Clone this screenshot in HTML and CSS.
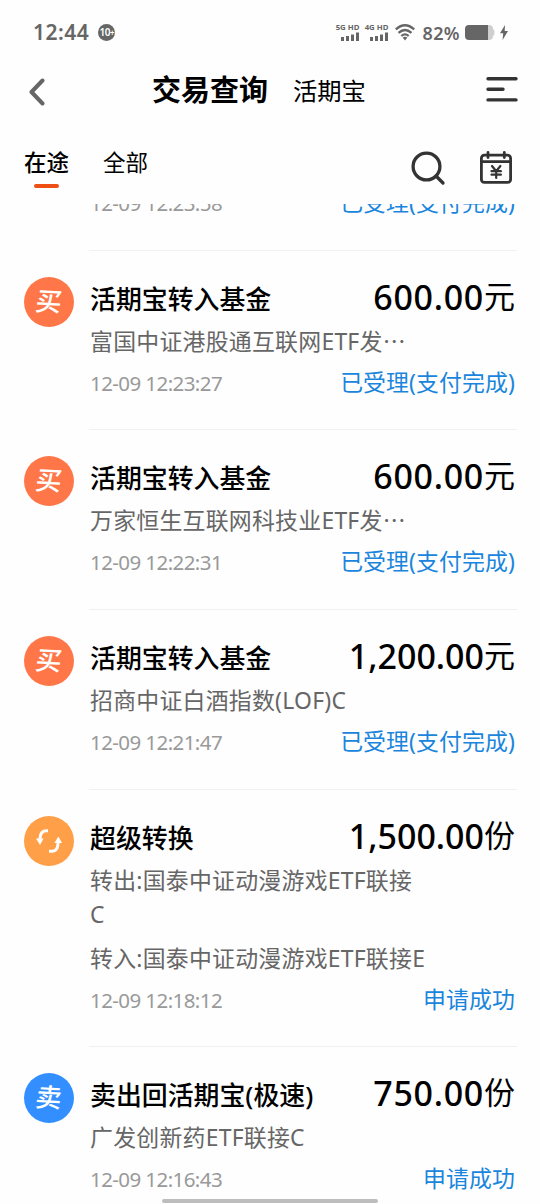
FILE: index.html
```html
<!DOCTYPE html>
<html lang="zh-CN">
<head>
  <meta charset="UTF-8">
  <meta name="viewport" content="width=device-width, initial-scale=1">
  <title>交易查询</title>
  <link rel="stylesheet" href="styles.css">
</head>
<body>
  <header class="top">
    <!-- Status bar -->
    <div class="status-bar">
      <span class="clock">12:44</span>
      <span class="badge">10<i>+</i></span>
      <div class="signals">
        <div class="signal">
          <span>5G HD</span>
          <svg width="18" height="9" viewBox="0 0 18 9"><path d="M0 5h3v4H0zM5 4h3v5H5zM10 2.5h3V9h-3zM15 .5h3V9h-3z"/></svg>
        </div>
        <div class="signal">
          <span>4G HD</span>
          <svg width="18" height="9" viewBox="0 0 18 9"><path d="M0 5h3v4H0zM5 4h3v5H5zM10 2.5h3V9h-3zM15 .5h3V9h-3z"/></svg>
        </div>
      </div>
      <svg class="wifi" width="20" height="17" viewBox="0 0 20 17">
        <path d="M.8 5.4Q10-2.900 19.200 5.400M3.500 8.900Q10 3 16.500 8.900M6.300 12Q10 8.700 13.700 12"/>
        <path class="dot" d="M7.6 13.500Q10 12 12.4 13.500L10 16.5z"/>
      </svg>
      <span class="percent">82%</span>
      <svg class="battery" width="30" height="15" viewBox="0 0 30 15">
        <path fill="#cfcfcf" d="M20 0h4q4 0 4 4 1.5.5 1.5 3.5T28 11q0 4-4 4h-4z"/>
        <path fill="#666" d="M4 0h19v15H4q-4 0-4-4V4q0-4 4-4z"/>
      </svg>
      <svg class="bolt" width="8" height="15" viewBox="0 0 8 15"><path d="M5 0L0 8.3h3.2L2.6 15 8 6H4.7z"/></svg>
    </div>

    <!-- Title bar -->
    <div class="nav">
      <svg class="back" width="18" height="30" viewBox="0 0 18 30"><path d="M15.500 3.5L4.500 15l11 11.5"/></svg>
      <h1 class="title">交易查询</h1>
      <span class="subtitle">活期宝</span>
      <svg class="menu" width="32" height="26" viewBox="0 0 32 26"><path d="M2 1.700h28M2 12.300h15M2 22.900h28"/></svg>
    </div>

    <!-- Tabs -->
    <div class="tabs">
      <span class="tab active">在途</span>
      <span class="tab">全部</span>
      <svg class="search" width="36" height="36" viewBox="0 0 36 36"><circle cx="16.5" cy="16.5" r="13.4"/><path d="M26 26l7 7"/></svg>
      <svg class="calendar" width="34" height="34" viewBox="0 0 34 34">
        <rect x="2.4" y="4.2" width="29.2" height="27.2" rx="3"/>
        <path d="M2.4 10.700h29.200M9 1.500v5M25.300 1.500v5"/>
        <path class="yen" d="M13 15l4.200 5.200 4.200-5.200M12.500 20.200h9.400M12.500 23.700h9.400M17.200 20v7"/>
      </svg>
    </div>
  </header>

  <main class="list">
    <section class="item scrolled">
      <div class="body">
        <div class="row foot"><span class="date">12-09 12:23:58</span><span class="state">已受理(支付完成)</span></div>
      </div>
    </section>

    <section class="item">
      <div class="icon buy"><span>买</span></div>
      <div class="body">
        <div class="row head"><b class="name">活期宝转入基金</b><span class="amount">600.00<em>元</em></span></div>
        <p class="fund">富国中证港股通互联网ETF发⋯</p>
        <div class="row foot"><span class="date">12-09 12:23:27</span><span class="state">已受理(支付完成)</span></div>
      </div>
    </section>

    <section class="item">
      <div class="icon buy"><span>买</span></div>
      <div class="body">
        <div class="row head"><b class="name">活期宝转入基金</b><span class="amount">600.00<em>元</em></span></div>
        <p class="fund">万家恒生互联网科技业ETF发⋯</p>
        <div class="row foot"><span class="date">12-09 12:22:31</span><span class="state">已受理(支付完成)</span></div>
      </div>
    </section>

    <section class="item">
      <div class="icon buy"><span>买</span></div>
      <div class="body">
        <div class="row head"><b class="name">活期宝转入基金</b><span class="amount long">1,200.00<em>元</em></span></div>
        <p class="fund">招商中证白酒指数(LOF)C</p>
        <div class="row foot"><span class="date">12-09 12:21:47</span><span class="state">已受理(支付完成)</span></div>
      </div>
    </section>

    <section class="item">
      <div class="icon swap">
        <svg width="28" height="26" viewBox="0 0 28 26">
          <path d="M13 2.700H11.500Q5.500 2.700 5 10v2M14 23.300h2.500q6 0 6.500-7.300V14"/>
          <path class="tip" d="M1 10.500h7.500L5 17zM19.500 15H27L23.300 8.500z"/>
        </svg>
      </div>
      <div class="body">
        <div class="row head"><b class="name">超级转换</b><span class="amount long">1,500.00<em>份</em></span></div>
        <p class="fund">转出:国泰中证动漫游戏ETF联接<br>C</p>
        <p class="fund">转入:国泰中证动漫游戏ETF联接E</p>
        <div class="row foot"><span class="date">12-09 12:18:12</span><span class="state">申请成功</span></div>
      </div>
    </section>

    <section class="item">
      <div class="icon sell"><span>卖</span></div>
      <div class="body">
        <div class="row head"><b class="name">卖出回活期宝(极速)</b><span class="amount">750.00<em>份</em></span></div>
        <p class="fund">广发创新药ETF联接C</p>
        <div class="row foot"><span class="date">12-09 12:16:43</span><span class="state">申请成功</span></div>
      </div>
    </section>
  </main>

  <div class="home-bar"></div>
</body>
</html>
```
FILE: styles.css
```css
* {
  box-sizing: border-box;
}

body {
  margin: 0;
  height: 1204px;
  display: flex;
  flex-direction: column;
  overflow: hidden;
  position: relative;
  background: #fefefe;
  color: #000;
  font-family: "Noto Sans", "Noto Sans CJK SC", sans-serif;
}

svg {
  display: block;
  fill: none;
  flex: none;
}

.top {
  height: 204px;
  flex: none;
}

/* status bar */
.status-bar {
  height: 64px;
  padding: 0 32px 0 33px;
  display: flex;
  align-items: center;
  color: #666;
}

.clock {
  font-size: 21px;
  font-weight: 600;
  line-height: 28px;
  letter-spacing: 0.5px;
}

.badge {
  width: 17px;
  height: 17px;
  margin-left: 9px;
  border-radius: 50%;
  background: #666;
  color: #fff;
  font-size: 10px;
  font-weight: 600;
  line-height: 17px;
  letter-spacing: -0.5px;
  text-align: center;
  white-space: nowrap;
}

.badge i {
  font-size: 8px;
  font-style: normal;
}

.signals {
  display: flex;
  gap: 5px;
  margin: -1px 0 0 auto;
}

.signal {
  width: 24px;
  display: flex;
  flex-direction: column;
  align-items: flex-end;
  gap: 1px;
}

.signal span {
  font-size: 7.8px;
  font-weight: 700;
  line-height: 8px;
  white-space: nowrap;
}

.signal svg,
.wifi .dot,
.bolt {
  fill: #666;
}

.wifi {
  margin-left: 7px;
  stroke: #666;
  stroke-width: 2.3;
}

.wifi .dot {
  stroke: none;
}

.percent {
  margin: 2px 0 0 7px;
  font-size: 18px;
  font-weight: 600;
  letter-spacing: 0.4px;
}

.battery {
  margin-left: 5px;
}

.bolt {
  margin-left: 5px;
}

/* title bar */
.nav {
  height: 56px;
  padding: 0 22px 0 27px;
  display: flex;
  align-items: center;
}

.back {
  stroke: #666;
  stroke-width: 4;
  stroke-linecap: round;
  stroke-linejoin: round;
}

.title {
  margin: -4px 0 0 107px;
  font-size: 29px;
  font-weight: 700;
  line-height: 42px;
}

.subtitle {
  margin: -5px 0 0 25px;
  font-size: 24.3px;
}

.menu {
  margin: -4px 0 0 auto;
  stroke: #333;
  stroke-width: 3.4;
  stroke-linecap: round;
}

/* tabs */
.tabs {
  height: 84px;
  padding: 0 27px 0 24px;
  display: flex;
}

.tab {
  height: 68px;
  margin-right: 34px;
  padding-top: 26px;
  font-size: 22.5px;
  line-height: 34px;
}

.tab.active {
  font-weight: 500;
}

.tab.active::after {
  content: "";
  display: block;
  width: 25px;
  height: 4px;
  margin: 4px auto 0 10px;
  border-radius: 2px;
  background: #ee4f14;
}

.search {
  margin: 30px 0 0 auto;
  stroke: #333;
  stroke-width: 3.3;
  stroke-linecap: round;
}

.calendar {
  margin: 31px 0 0 33px;
  stroke: #333;
  stroke-width: 2.8;
  stroke-linecap: round;
}

.calendar .yen {
  stroke-width: 2.2;
}

/* records */
.list {
  flex: 1;
  min-height: 0;
  overflow: hidden;
}

.item {
  display: flex;
  padding: 0 23px 0 24px;
}

.icon {
  width: 50px;
  height: 50px;
  margin: 26px 15px 0 0;
  flex: none;
  display: flex;
  align-items: center;
  justify-content: center;
  border-radius: 50%;
  color: #fff;
  font-size: 26px;
  font-weight: 500;
  line-height: 50px;
}

.icon span {
  margin-top: -2px;
  transform: rotate(3deg) skewX(-5deg);
}

.icon.buy {
  background: #ff7749;
}

.icon.swap {
  background: #ff9f48;
}

.icon.sell {
  background: #338fff;
}

.swap svg {
  stroke: #fff;
  stroke-width: 3;
}

.swap .tip {
  fill: #fff;
  stroke: none;
}

.body {
  flex: 1;
  padding: 25px 2px 29.7px 1px;
  border-bottom: 1px solid #f0f0f0;
}

.row {
  display: flex;
  justify-content: space-between;
  white-space: nowrap;
}

.head {
  height: 46px;
  line-height: 46px;
}

.name {
  font-size: 25.9px;
  font-weight: 500;
}

.amount {
  margin-top: -2px;
  font-size: 34px;
  font-weight: 500;
  letter-spacing: 0.7px;
}

.amount.long {
  letter-spacing: 0;
}

.amount em {
  position: relative;
  top: -2px;
  font-size: 31px;
  font-weight: 400;
  font-style: normal;
  letter-spacing: 0;
}

.fund {
  margin: 3px 0 0;
  color: #666;
  font-size: 22.9px;
  line-height: 34px;
  letter-spacing: 0.25px;
}

.fund + .fund {
  margin-top: 10px;
}

.foot {
  margin-top: 7px;
  line-height: 34px;
}

.date {
  color: #999;
  font-size: 20.5px;
  letter-spacing: -0.58px;
}

.state {
  color: #1a85dc;
  font-size: 22.9px;
  letter-spacing: 0.1px;
}

/* record scrolled halfway under the header */
.scrolled .body {
  margin-left: 65px;
  padding-top: 0;
}

.scrolled .foot {
  margin-top: -18px;
}

.home-bar {
  position: absolute;
  left: 162px;
  bottom: 1px;
  width: 216px;
  height: 4px;
  border-radius: 2px;
  background: #bdbdbd;
}
```
